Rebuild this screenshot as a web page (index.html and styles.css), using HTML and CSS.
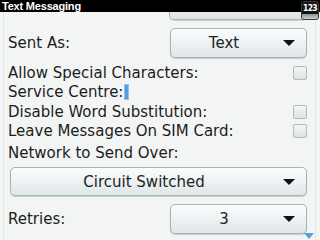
FILE: index.html
```html
<!DOCTYPE html>
<html>
<head>
<meta charset="utf-8">
<link rel="stylesheet" href="styles.css">
</head>
<body>
<div class="screen">
  <div class="title">Text Messaging</div>
  <div class="badge"><span>123</span></div>
  <div class="content">
    <div class="stub"></div>
    <div class="row drow">
      <span class="label">Sent As:</span>
      <div class="drop small"><span class="val">Text</span><span class="arrow"></span></div>
    </div>
    <div class="row">
      <span class="label">Allow Special Characters:</span>
      <span class="check"></span>
    </div>
    <div class="row">
      <span class="label">Service Centre:<span class="cursor"></span></span>
    </div>
    <div class="row">
      <span class="label">Disable Word Substitution:</span>
      <span class="check"></span>
    </div>
    <div class="row">
      <span class="label">Leave Messages On SIM Card:</span>
      <span class="check"></span>
    </div>
    <div class="row net">
      <span class="label">Network to Send Over:</span>
    </div>
    <div class="drop wide"><span class="val">Circuit Switched</span><span class="arrow"></span></div>
    <div class="row drow retries">
      <span class="label">Retries:</span>
      <div class="drop small"><span class="val">3</span><span class="arrow"></span></div>
    </div>
  </div>
  <div class="scroll"></div>
</div>
</body>
</html>
```
FILE: styles.css
```css
html, body {
  margin: 0;
  padding: 0;
}
body {
  width: 320px;
  height: 240px;
  overflow: hidden;
  background: #f3f5f5;
  font-family: "DejaVu Sans", "Liberation Sans", sans-serif;
}
.screen {
  position: relative;
  width: 320px;
  height: 240px;
  overflow: hidden;
}
.title {
  height: 12px;
  background: #000;
  color: #fff;
  font-family: "Liberation Sans", sans-serif;
  font-size: 11px;
  font-weight: bold;
  line-height: 12px;
  padding-left: 2px;
  letter-spacing: -0.2px;
}
.badge {
  position: absolute;
  top: 1px;
  right: 1px;
  width: 18px;
  height: 19px;
  border-radius: 3px;
  background: linear-gradient(#151515 0, #151515 68%, #7f9096 68%, #c8d4d8 100%);
  border: 1px solid #3a3a3a;
  box-sizing: border-box;
}
.badge span {
  display: block;
  color: #fff;
  font-family: "DejaVu Sans Condensed", "DejaVu Sans", sans-serif;
  font-size: 8.5px;
  font-weight: bold;
  text-align: center;
  line-height: 12px;
  letter-spacing: -0.6px;
}
.content {
  margin: 0 4px 0 3px;
  height: 228px;
  border-left: 1px solid #e2e7e7;
  border-right: 1px solid #e2e7e7;
  padding: 0 8px 0 4px;
  display: flex;
  flex-direction: column;
}
.stub {
  align-self: flex-end;
  width: 136px;
  height: 7px;
  border: 1px solid #aab4b6;
  border-top: none;
  border-radius: 0 0 5px 5px;
  background: linear-gradient(#e6eced, #dbe3e5);
  box-shadow: 0 1px 0 #c9d0d2;
}
.row {
  display: flex;
  align-items: center;
  justify-content: space-between;
  height: 20px;
  font-size: 15px;
  color: #1c1c1c;
}
.drow {
  height: 30px;
  margin-top: 8px;
  margin-bottom: 6px;
}
.net {
  height: 22px;
  padding-top: 2px;
}
.label {
  white-space: nowrap;
  display: flex;
  align-items: center;
}
.cursor {
  display: inline-block;
  width: 3px;
  height: 14px;
  margin-left: 1px;
  background: #5b9be0;
  border: 0.5px solid #8fc0f0;
}
.check {
  width: 12px;
  height: 12px;
  border: 1px solid #b3babc;
  border-radius: 2px;
  background: linear-gradient(#f4f6f7, #dde3e4);
}
.drop {
  display: flex;
  align-items: center;
  box-sizing: border-box;
  height: 30px;
  border: 1px solid #a9b2b4;
  border-radius: 5px;
  background: linear-gradient(#fbfdfd 0%, #eef3f4 45%, #dfe7e9 100%);
  box-shadow: 0 1px 1px #c4cccd;
  position: relative;
  font-size: 15px;
  color: #222;
}
.small {
  width: 137px;
}
.wide {
  width: 297px;
  margin-left: 2px;
  margin-top: 4px;
}
.val {
  flex: 1;
  text-align: center;
  padding-right: 6px;
}
.arrow {
  width: 0;
  height: 0;
  border-left: 6px solid transparent;
  border-right: 6px solid transparent;
  border-top: 6px solid #111;
  margin-right: 11px;
}
.retries {
  margin-top: 8px;
}
.scroll {
  position: absolute;
  right: 6px;
  bottom: 1px;
  width: 0;
  height: 0;
  border-left: 5px solid transparent;
  border-right: 5px solid transparent;
  border-top: 6px solid #5aa0d8;
}
```
